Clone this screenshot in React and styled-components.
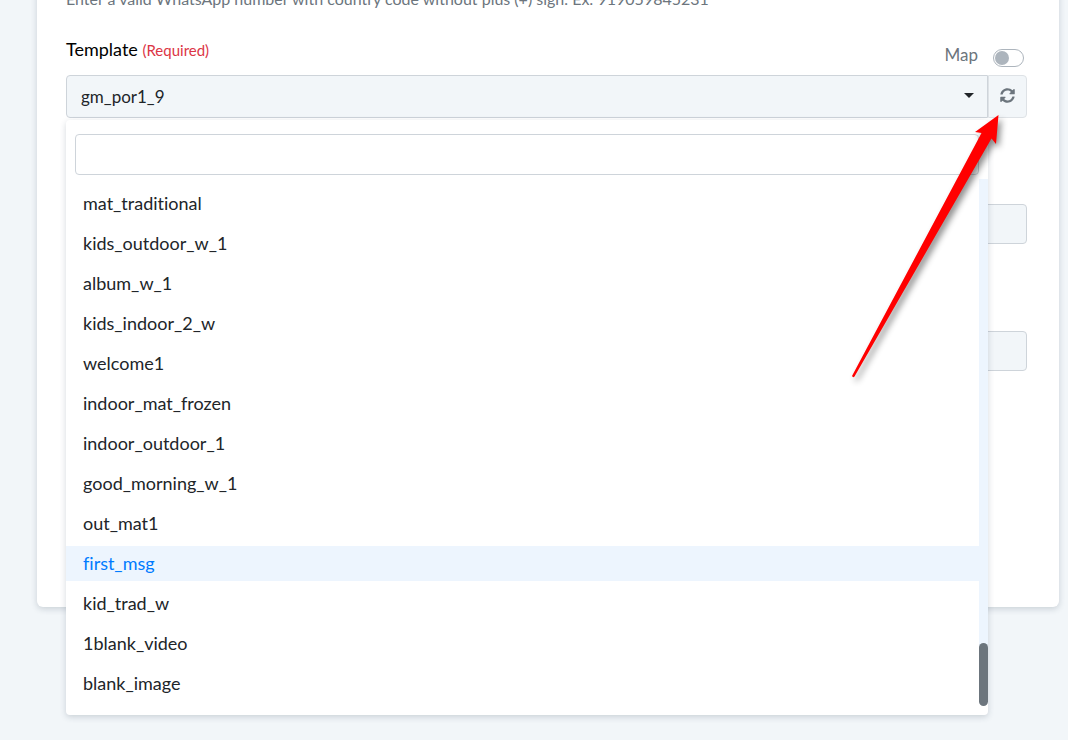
import React, { useState } from 'react'
import styled, { createGlobalStyle } from 'styled-components'
import { FaSyncAlt } from 'react-icons/fa'

const templates = [
  'mat_traditional',
  'kids_outdoor_w_1',
  'album_w_1',
  'kids_indoor_2_w',
  'welcome1',
  'indoor_mat_frozen',
  'indoor_outdoor_1',
  'good_morning_w_1',
  'out_mat1',
  'first_msg',
  'kid_trad_w',
  '1blank_video',
  'blank_image',
]

const GlobalStyle = createGlobalStyle`
  * {
    box-sizing: border-box;
  }

  body {
    margin: 0;
    background-color: #f2f6f9;
    color: #212529;
    font-family: Lato, "Liberation Sans", sans-serif;
    font-size: 17px;
    font-variant-ligatures: none;
  }

  input, select, button {
    font: inherit;
    color: inherit;
  }
`

const Page = styled.main`
  min-height: 100vh;
  padding: 0 9px 0 37px;
  overflow: hidden;
`

const Card = styled.form`
  margin-top: -13px;
  padding: 0 32px 236px 29px;
  background-color: #fff;
  border-radius: 6px;
  box-shadow: 0 2px 6px rgba(40, 60, 80, 0.2);
`

const Hint = styled.p`
  margin: 0;
  color: #6c757d;
  font-size: 16px;
  line-height: 24px;
  white-space: nowrap;
`

const FieldHead = styled.div`
  display: flex;
  justify-content: space-between;
  align-items: flex-start;
  height: 64px;
  padding-top: 26px;
`

const Label = styled.label`
  color: #000;
  font-size: 18px;
  line-height: 24px;

  small {
    color: #dc3545;
    font-size: 15px;
  }
`

const MapLabel = styled.label`
  display: flex;
  gap: 15px;
  padding: 6px 3px 0 0;
  color: #6c757d;
  line-height: 24px;
`

const Switch = styled.input`
  appearance: none;
  display: flex;
  width: 31px;
  height: 18px;
  margin: 6px 0 0;
  padding: 1px;
  border: 1px solid #adb5bd;
  border-radius: 9px;
  background-color: #fff;

  &::before {
    content: '';
    width: 14px;
    height: 14px;
    border-radius: 50%;
    background-color: #adb5bd;
  }

  &:checked {
    justify-content: flex-end;
  }
`

const InputRow = styled.div`
  position: relative;
  display: flex;
`

const SelectWrapper = styled.div`
  position: relative;
  display: flex;
  flex: 1;
`

const Select = styled.select`
  appearance: none;
  width: 100%;
  height: 43px;
  padding: 0 14px;
  border: 1px solid #ced4da;
  border-radius: 4px 0 0 4px;
  background-color: #f2f6f9;
  outline: none;
`

const Caret = styled.span`
  position: absolute;
  top: 18px;
  right: 14px;
  border: 5px solid transparent;
  border-top-color: #212529;
  border-bottom: 0;
  pointer-events: none;
`

const RefreshButton = styled.button`
  display: flex;
  align-items: center;
  justify-content: center;
  width: 39px;
  padding: 0 0 2px;
  border: 1px solid #dee2e6;
  border-radius: 0 4px 4px 0;
  background-color: #f2f6f9;
  color: #6c757d;
  font-size: 15px;
  cursor: pointer;
`

const Dropdown = styled.div`
  position: absolute;
  top: 45px;
  left: 0;
  right: 0;
  z-index: 1;
  padding: 14px 0 9px;
  border-radius: 4px;
  background-color: #fff;
  box-shadow: 0 2px 6px rgba(40, 60, 80, 0.2);
`

const Search = styled.input`
  display: block;
  width: calc(100% - 18px);
  height: 41px;
  margin: 0 9px 4px;
  padding: 0 12px;
  border: 1px solid #ced4da;
  border-radius: 4px;
  background-color: #fff;
`

const ListArea = styled.div`
  display: flex;
`

const List = styled.ul`
  display: flex;
  flex: 1;
  flex-direction: column;
  gap: 5px;
  margin: 0;
  padding: 7px 0 5px;
  list-style: none;
`

const Option = styled.li`
  height: 35px;
  padding: 0 17px;
  color: ${({ $active }) => ($active ? '#007bff' : '#212529')};
  background-color: ${({ $active }) => ($active ? '#edf5fe' : 'transparent')};
  font-size: 18px;
  line-height: 34px;
  cursor: pointer;
`

const Scrollbar = styled.div`
  display: flex;
  flex-direction: column;
  justify-content: flex-end;
  width: 9px;
  background: linear-gradient(#edf5fe, #edf5fe) top / 100% calc(100% - 5px) no-repeat;

  span {
    height: 63px;
    border-radius: 5px;
    background-color: #6c757d;
  }
`

const TextInput = styled.input`
  display: block;
  width: 100%;
  height: 40px;
  margin-top: ${({ $gap }) => $gap}px;
  padding: 0 14px;
  border: 1px solid #ced4da;
  border-radius: 4px;
  background-color: #f2f6f9;
`

const Arrow = styled.svg`
  position: absolute;
  top: 35px;
  right: 12px;
  z-index: 2;
  overflow: visible;
  pointer-events: none;
  filter: drop-shadow(3px 4px 3px rgba(0, 0, 0, 0.45));
`

const App = () => {
  const [active, setActive] = useState('first_msg')
  const [search, setSearch] = useState('')

  return (
    <Page>
      <GlobalStyle />
      <Card onSubmit={e => e.preventDefault()}>
        <Hint>Enter a valid WhatsApp number with country code without plus (+) sign. Ex: 919059845231</Hint>
        <FieldHead>
          <Label htmlFor="template">Template <small>(Required)</small></Label>
          <MapLabel>
            Map
            <Switch type="checkbox" />
          </MapLabel>
        </FieldHead>
        <InputRow>
          <SelectWrapper>
            <Select id="template" defaultValue="gm_por1_9">
              <option>gm_por1_9</option>
              {templates.map(name => <option key={name}>{name}</option>)}
            </Select>
            <Caret />
            <Dropdown>
              <Search
                type="search"
                aria-label="Search templates"
                value={search}
                onChange={e => setSearch(e.target.value)}
              />
              <ListArea>
                <List role="listbox" aria-label="Templates">
                  {templates.filter(name => name.includes(search)).map(name => (
                    <Option
                      key={name}
                      role="option"
                      aria-selected={name === active}
                      $active={name === active}
                      onMouseEnter={() => setActive(name)}
                    >
                      {name}
                    </Option>
                  ))}
                </List>
                <Scrollbar><span /></Scrollbar>
              </ListArea>
            </Dropdown>
          </SelectWrapper>
          <RefreshButton type="button" aria-label="Refresh templates">
            <FaSyncAlt />
          </RefreshButton>
          <Arrow width="165" height="280" viewBox="850 110 165 280" aria-hidden="true">
            <path d="M998.5 115 L975 132 L981.5 133 L852 376 Q853 378 854.5 376.5 L991.5 138.5 L996 144 Z" fill="#f00" />
          </Arrow>
        </InputRow>
        <TextInput $gap={86} aria-label="Header value" />
        <TextInput $gap={87} aria-label="Body value" />
      </Card>
    </Page>
  )
}

export default App
